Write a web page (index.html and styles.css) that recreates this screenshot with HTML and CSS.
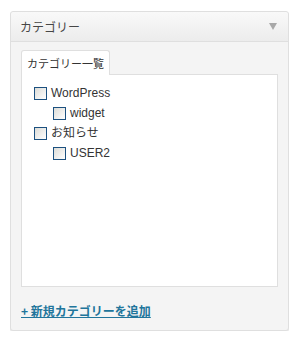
FILE: index.html
```html
<!DOCTYPE html>
<html lang="ja">
<head>
    <meta charset="UTF-8">
    <title>カテゴリー</title>
    <link rel="stylesheet" href="styles.css">
</head>
<body>
    <div class="postbox">
        <div class="postbox-head">
            <h3>カテゴリー</h3>
            <span class="toggle"></span>
        </div>
        <div class="inside">
            <ul class="tabs">
                <li class="tab active">カテゴリー一覧</li>
            </ul>
            <div class="tab-panel">
                <ul class="checklist">
                    <li>
                        <label><input type="checkbox"><span class="box"></span>WordPress</label>
                        <ul class="children">
                            <li><label><input type="checkbox"><span class="box"></span>widget</label></li>
                        </ul>
                    </li>
                    <li>
                        <label><input type="checkbox"><span class="box"></span>お知らせ</label>
                        <ul class="children">
                            <li><label><input type="checkbox"><span class="box"></span>USER2</label></li>
                        </ul>
                    </li>
                </ul>
            </div>
            <div class="adder">
                <a href="#">+ 新規カテゴリーを追加</a>
            </div>
        </div>
    </div>
</body>
</html>
```

FILE: styles.css
```css
body {
    margin: 0;
    padding: 11px 10px 0;
    background-color: #fff;
    font-family: "Liberation Sans", "Noto Sans CJK JP", sans-serif;
    font-size: 12px;
    color: #333;
}
ul {
    list-style: none;
    margin: 0;
    padding: 0;
}
.postbox {
    background: #f4f4f4;
    border: 1px solid #dfdfdf;
    border-radius: 3px;
    height: 318px;
    box-shadow: 0 1px 0 #e8e8e8;
}
.postbox-head {
    height: 29px;
    display: flex;
    align-items: center;
    justify-content: space-between;
    padding: 0 11px 0 9px;
    border-bottom: 1px solid #dfdfdf;
    background: linear-gradient(to bottom, #f9f9f9, #ececec);
    border-radius: 3px 3px 0 0;
}
.postbox-head h3 {
    margin: 0;
    font-family: "Noto Sans CJK JP", sans-serif;
    font-size: 12px;
    font-weight: normal;
    color: #464646;
}
.toggle {
    width: 0;
    height: 0;
    border-left: 4px solid transparent;
    border-right: 4px solid transparent;
    border-top: 7px solid #a8a8a8;
}
.inside {
    padding: 8px 10px 0;
}
.tabs {
    display: flex;
}
.tab {
    background: #fff;
    border: 1px solid #dfdfdf;
    border-bottom: none;
    border-radius: 3px 3px 0 0;
    padding: 0 5px;
    height: 24px;
    line-height: 24px;
    font-family: "Noto Sans CJK JP", sans-serif;
    font-size: 11px;
    color: #333;
    margin-bottom: -1px;
    position: relative;
}
.tab-panel {
    background: #fff;
    border: 1px solid #dfdfdf;
    height: 203px;
    padding: 8px 12px 0;
}
.checklist li {
    line-height: 20px;
}
.checklist label {
    display: flex;
    align-items: center;
    height: 20px;
}
.checklist input {
    display: none;
}
.box {
    width: 11px;
    height: 11px;
    border: 1px solid #1c5180;
    background: linear-gradient(135deg, #dcdcd7, #fff);
    margin-right: 4px;
}
.children {
    padding-left: 19px;
}
.adder {
    padding-top: 15px;
}
.adder a {
    font-family: "Noto Sans CJK JP", sans-serif;
    font-weight: bold;
    font-size: 12px;
    color: #21759b;
    text-decoration: underline;
}
```
